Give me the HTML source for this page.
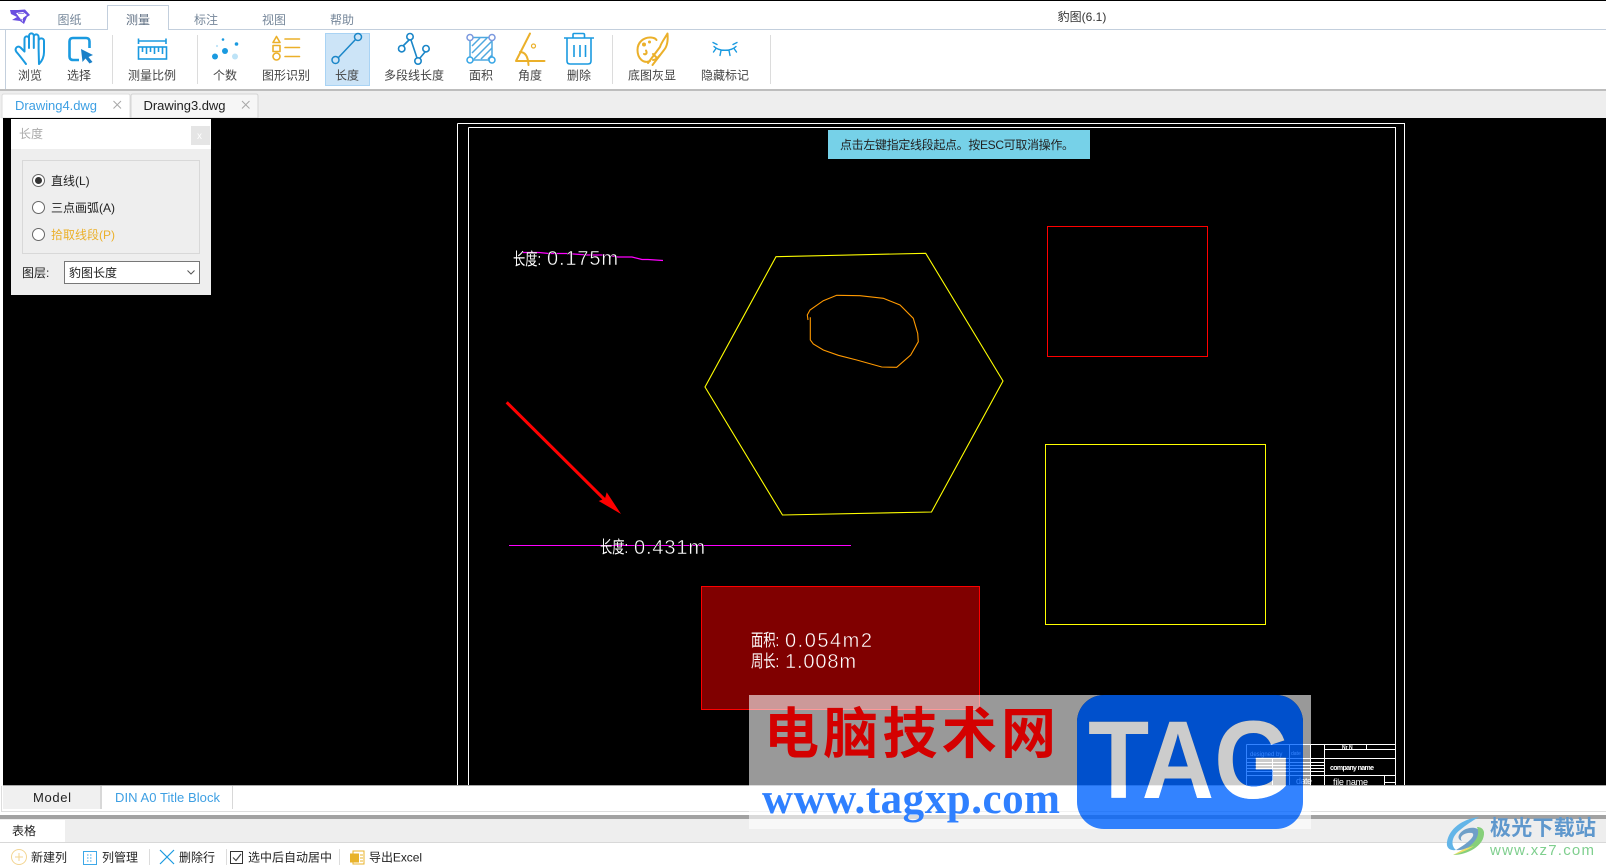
<!DOCTYPE html>
<html><head><meta charset="utf-8"><style>
html,body{margin:0;padding:0;background:#fff;width:1606px;height:865px;overflow:hidden}
svg{display:block;position:absolute;left:0;top:0}
text{font-family:"Liberation Sans","Noto Sans CJK SC",sans-serif;font-size:12px;fill:#444}
.c{text-anchor:middle}
.b{fill:none;stroke:#1a9ae0;stroke-width:2;stroke-linecap:round;stroke-linejoin:round}
.o{fill:none;stroke:#ebb02a;stroke-width:2;stroke-linecap:round;stroke-linejoin:round}
.cad{fill:#fff;stroke-width:.45}
.l{shape-rendering:crispEdges;fill:none}
</style></head><body>
<svg width="1606" height="865" viewBox="0 0 1606 865">
<defs>
<mask id="tagm" maskUnits="userSpaceOnUse" x="1070" y="690" width="240" height="145">
<rect x="1070" y="690" width="240" height="145" fill="#fff"/>
<text x="1088" y="798" textLength="204" lengthAdjust="spacingAndGlyphs" style="font-size:110px;font-weight:bold;fill:#000">TAG</text>
</mask>
</defs>
<rect width="1606" height="865" fill="#fff"/>
<rect width="1606" height="1" fill="#000"/>

<!-- ribbon -->
<path class="l" d="M0 29.500H107.500V5.500H168.500V29.500H1606M5.500 30V89" stroke="#c3cfdd"/>
<rect x="108" y="6" width="60" height="25" fill="#fff"/>
<text x="69.500" y="24" class="c" style="fill:#76879a">图纸</text>
<text x="138" y="24" class="c" style="fill:#5f6f83">测量</text>
<text x="206" y="24" class="c" style="fill:#76879a">标注</text>
<text x="274" y="24" class="c" style="fill:#76879a">视图</text>
<text x="342" y="24" class="c" style="fill:#76879a">帮助</text>
<text x="1082" y="21" class="c" style="fill:#333">豹图(6.1)</text>
<!-- app logo -->
<path d="M10 10L18 10L25 9.500L30 15L27 17L24 24L20 21L12 20L17 17L11 14Z" fill="#6a4fe0"/>
<path d="M16 13L23 12L27 15L23 18L23 22L19 17Z" fill="#fff"/>
<path d="M18 13.500L24 13.500M20 19L23 20" stroke="#9c8de8" fill="none"/>

<rect x="0" y="89" width="1606" height="2" fill="#bdbdbd"/>
<rect x="0" y="91" width="1606" height="27" fill="#eee"/>

<!-- separators -->
<path class="l" stroke="#dcdcdc" d="M112.500 35V84M197.500 35V84M612.500 35V84M770.500 35V84"/>
<rect x="325.500" y="33.500" width="44" height="52" fill="#cce4f7" stroke="#a9d3f4"/>

<!-- hand -->
<path class="b" d="M26 64C23 60 20 56 16.500 52C14 48.500 17.500 45 20.500 47.500L24.500 51.500V39C24.500 35.500 29 35.500 29 39V48M29 48V36C29 32.500 33.800 32.500 33.800 36V48M33.800 48V37C33.800 33.500 38.600 33.500 38.600 37V49M38.600 49V41C38.600 37.500 44 37.500 44 41V52C44 57 42 61 39 64Z"/>
<!-- select -->
<path d="M79 60H73C70.500 60 69.500 58.500 69.500 56.500V41.500C69.500 39.500 70.500 38 73 38H86C88.500 38 89.500 39.500 89.500 41.500V48" fill="none" stroke="#1a9ae0" stroke-width="2.600"/>
<path d="M81 49L93 55L88.500 57L92.500 62L89.500 63.500L85.500 58.500L82.500 62Z" fill="#1a80c8"/>
<!-- ruler -->
<path fill="none" stroke="#1a9ae0" stroke-width="1.600" d="M138.500 38.500V44M166 38.500V44M138.500 41H166"/>
<rect x="138.500" y="47" width="28" height="12" fill="#fff" stroke="#1a9ae0" stroke-width="1.600"/>
<path fill="none" stroke="#1a9ae0" stroke-width="1.600" d="M142.500 47V52M146.500 47V54M150.500 47V52M154.500 47V54M158.500 47V52M162.500 47V54"/>
<!-- count -->
<circle cx="223" cy="39.500" r="1.300" fill="#1a9ae0"/><circle cx="236.500" cy="44" r="1.800" fill="#1a9ae0"/><circle cx="217" cy="46" r="1.100" fill="#bde3f7"/><circle cx="225" cy="51" r="3" fill="#1a9ae0"/><circle cx="215" cy="56.500" r="3" fill="#1a9ae0"/><circle cx="235" cy="56.500" r="3" fill="#bde3f7"/>
<!-- shape recog -->
<path class="o" style="stroke-width:1.600" d="M276.500 36.500L273 42.500H280ZM273 45.500H280V51.500H273ZM285 39H299.500M285 47.500H299.500M285 56.500H299.500"/>
<circle cx="276.500" cy="56.500" r="3.500" class="o" style="stroke-width:1.600"/>
<!-- length -->
<path fill="none" stroke="#1a86c8" stroke-width="1.500" d="M338.500 57.500L355.500 39.500"/>
<circle cx="335.500" cy="60" r="3.500" fill="none" stroke="#1a86c8" stroke-width="1.500"/><circle cx="358" cy="37" r="3.500" fill="none" stroke="#1a86c8" stroke-width="1.500"/>
<!-- polyline -->
<path fill="none" stroke="#1a86c8" stroke-width="1.600" d="M403 46L409 40M411 40L417 58M420 58L425 52"/>
<g fill="none" stroke="#1a86c8" stroke-width="1.600"><circle cx="401.700" cy="48.700" r="3.200"/><circle cx="410" cy="36.700" r="3.200"/><circle cx="418" cy="61" r="3.200"/><circle cx="426" cy="48.700" r="3.200"/></g>
<!-- area -->
<rect x="470" y="37.500" width="22" height="22.500" fill="#fff" stroke="#4ea8e0" stroke-width="1.500"/>
<path stroke="#4ea8e0" stroke-width="1.500" fill="none" d="M472 46L480 38M472 53L487 38M474 59L492 41M481 59L492 48M488 59L492 55"/>
<g fill="#fff" stroke-width="1.500"><circle cx="470" cy="37.500" r="3" stroke="#7a98de"/><circle cx="492" cy="37.500" r="3" stroke="#7a98de"/><circle cx="470" cy="60" r="3" stroke="#35a5e5"/><circle cx="492" cy="60" r="3" stroke="#35a5e5"/></g>
<!-- angle -->
<path class="o" d="M530 33.500L516 61H544.500M520 52C525 52 528 56 528.500 65"/>
<circle cx="533.500" cy="46" r="2" fill="none" stroke="#ebb02a" stroke-width="1.200"/>
<!-- trash -->
<path fill="none" stroke="#1a9ae0" stroke-width="1.600" d="M564 38H594M573 38V34.500C573 33.800 573.500 33.500 574 33.500H583C583.800 33.500 584.500 34 584.500 34.800V38M567 38V61C567 63 568 64 570 64H588C590 64 591 63 591 61V38M574 45V57M580 45V57M585.500 45V57"/>
<!-- palette -->
<path class="o" d="M650 61C643 64 637.500 58 637.500 50C637.500 42 644 37 651 37.500C654 37.700 656 39 656.500 40M660 55C657 59 655 60 653 60M646 50.500C647.500 53 646 55 644 54"/>
<circle cx="644" cy="44.500" r="2" fill="#ebb02a"/><circle cx="649.500" cy="42" r="1.500" fill="#ebb02a"/>
<path class="o" d="M648 63L660 47C661 43 665 38 667.500 33.500C668 39 667.500 46 664 50L652.500 65M653 54L657 58"/>
<!-- hide -->
<path fill="none" stroke="#1a9ae0" stroke-width="1.400" stroke-linecap="round" d="M714 46.500C719 51.500 731 51.500 736 46.500M716 48.500L713.500 52M721 50.500L720 55.500M729 50.500L730 55.500M734 48.500L736.500 52M733 44.500L737 42.500M717 44.500L713 42.500"/>

<!-- labels -->
<g>
<text x="30" y="79.500" class="c">浏览</text><text x="79" y="79.500" class="c">选择</text>
<text x="152" y="79.500" class="c">测量比例</text><text x="225" y="79.500" class="c">个数</text>
<text x="286" y="79.500" class="c">图形识别</text><text x="347" y="79.500" class="c">长度</text>
<text x="414" y="79.500" class="c">多段线长度</text><text x="481" y="79.500" class="c">面积</text>
<text x="530" y="79.500" class="c">角度</text><text x="579" y="79.500" class="c">删除</text>
<text x="652" y="79.500" class="c">底图灰显</text><text x="725" y="79.500" class="c">隐藏标记</text>
</g>

<!-- doc tabs -->
<path d="M2 118V96Q2 94 4 94H128Q130 94 130 96V118Z" fill="#fff" stroke="#ddd" stroke-width="1"/>
<path d="M131 118V96Q131 94 133 94H256Q258 94 258 96V118Z" fill="#f6f6f6" stroke="#d4d4d4" stroke-width="1"/>
<text x="15" y="110" textLength="82" style="font-size:13px;fill:#3d9fe3">Drawing4.dwg</text>
<text x="143.500" y="110" textLength="82" style="font-size:13px;fill:#222">Drawing3.dwg</text>
<path stroke="#a8a8a8" fill="none" d="M113.500 101L121 108.500M121 101L113.500 108.500M242 101L249.500 108.500M249.500 101L242 108.500"/>

<!-- canvas -->
<rect x="3" y="118" width="1603" height="667" fill="#000"/>
<path class="l" stroke="#fff" d="M457.500 123.500H1404.500V785M457.500 123.500V785M468.500 127.500H1395.500V785M468.500 127.500V785"/>
<!-- title block -->
<path class="l" stroke="#fff" d="M1246.500 744.500H1395M1246.500 744.500V785M1289.500 744.500V785M1310.500 744.500V785M1324.500 744.500V785M1366.500 744.500V749.500M1324.500 749.500H1395M1324.500 758.500H1395M1246.500 758.500H1324.500M1246.500 762.500H1324.500M1246.500 765.500H1324.500M1246.500 768.500H1324.500M1246.500 771.500H1324.500M1246.500 775.500H1395M1384.500 775.500V785M1384.500 782.500H1395M1272.500 758.500V785"/>
<text x="1250" y="756" style="font-size:6px;fill:#fff">designed by</text>
<text x="1291" y="755" style="font-size:5px;fill:#fff">date</text>
<text x="1342" y="749" style="font-size:5px;fill:#fff;font-weight:bold">Nr N</text>
<text x="1330" y="770" textLength="44" style="font-size:7px;fill:#fff;font-weight:bold">company name</text>
<text x="1333" y="785" textLength="35" style="font-size:9px;fill:#fff">file name</text>
<text x="1296" y="784" textLength="16" style="font-size:9px;fill:#fff">date</text>

<!-- shapes -->
<path fill="none" stroke="#ffff00" stroke-width="1.100" d="M776 256.700L925.700 253.300L1003 381L931.500 512L782.500 515L705 387Z"/>
<path fill="none" stroke="#f90" stroke-width="1.100" d="M810.300 317.300L810.300 340L813.300 344L823.300 350L838.300 355.300L856.700 360L881.700 367L896.700 367.300L910.700 355L918.300 341.700L917.700 333.300L913.300 318.300L900 305L883.300 298.300L860 295.700L836.700 295.300L823.300 300.700L810 310L807.300 315L808 320"/>
<rect class="l" x="1047.500" y="226.500" width="160" height="130" stroke="#f00"/>
<rect class="l" x="1045.500" y="444.500" width="220" height="180" stroke="#ffff00"/>
<rect class="l" x="701.500" y="586.500" width="278" height="123" stroke="#f00" style="fill:#800000"/>
<path d="M506.700 402.300L608 503" stroke="#f00" stroke-width="3" fill="none"/>
<path d="M621 514L598.700 501L605 498.500L606.700 492.300Z" fill="#f00"/>
<path fill="none" stroke="#f0f" stroke-width="1.200" d="M523 252.500H539L549 253.500H567L587 255H607L618 257H632L642 259.500H648L663 260.500"/>
<path class="l" stroke="#f0f" d="M509 545.500H700M700 545.500H851"/>

<g class="cad">
<text x="513" y="265" textLength="28" lengthAdjust="spacingAndGlyphs" style="font-size:17px;fill:#fff">长度:</text>
<text x="547" y="265" textLength="71" stroke="#000" style="font-size:20px;fill:#fff">0.175m</text>
<text x="600" y="553" textLength="28" lengthAdjust="spacingAndGlyphs" style="font-size:17px;fill:#fff">长度:</text>
<text x="634" y="554" textLength="71" stroke="#000" style="font-size:20px;fill:#fff">0.431m</text>
<text x="751" y="646" textLength="28" lengthAdjust="spacingAndGlyphs" style="font-size:17px;fill:#fff">面积:</text>
<text x="785" y="647" textLength="87" stroke="#800000" style="font-size:20px;fill:#fff">0.054m2</text>
<text x="751" y="667" textLength="28" lengthAdjust="spacingAndGlyphs" style="font-size:17px;fill:#fff">周长:</text>
<text x="785" y="668" textLength="71" stroke="#800000" style="font-size:20px;fill:#fff">1.008m</text>
</g>

<!-- banner -->
<rect x="828" y="130" width="262" height="29" fill="#76d1e8"/>
<text x="840" y="149" textLength="234" style="fill:#222">点击左键指定线段起点。按ESC可取消操作。</text>

<!-- left panel -->
<rect x="11" y="119" width="200" height="176" fill="#eee"/>
<rect x="11" y="119" width="200" height="30" fill="#fff"/>
<rect x="191" y="126" width="19" height="19" fill="#e5e5e5"/>
<text x="197" y="139" style="font-size:10px;fill:#fff">x</text>
<text x="19" y="138" style="fill:#aaa">长度</text>
<rect class="l" x="22.500" y="160.500" width="177" height="93" stroke="#d8d8d8"/>
<g fill="#fff" stroke="#666" stroke-width="1"><circle cx="38.500" cy="180.500" r="6"/><circle cx="38.500" cy="207.500" r="6"/><circle cx="38.500" cy="234.500" r="6"/></g>
<circle cx="38.500" cy="180.500" r="3.500" fill="#333"/>
<text x="51" y="185" style="fill:#222">直线(L)</text>
<text x="51" y="212" style="fill:#222">三点画弧(A)</text>
<text x="51" y="239" style="fill:#ebb02a">拾取线段(P)</text>
<text x="22" y="277" style="fill:#222">图层:</text>
<rect class="l" x="64.500" y="261.500" width="135" height="22" stroke="#777" style="fill:#fff"/>
<text x="69" y="277" style="fill:#222">豹图长度</text>
<path fill="none" stroke="#555" d="M187.500 270.500L191 274L194.500 270.500"/>

<!-- sheet tabs -->
<rect x="3" y="785" width="1603" height="1" fill="#a8a8a8"/>
<rect x="3" y="786" width="97" height="23" fill="#f0f0f0"/>
<rect x="100" y="786" width="2" height="23" fill="#d8d8d8"/>
<rect x="232" y="786" width="1" height="23" fill="#d8d8d8"/>
<rect x="1" y="811" width="1605" height="1" fill="#ddd"/>
<rect x="1" y="786" width="1" height="25" fill="#ddd"/>
<text x="33" y="802" textLength="38" style="font-size:13px;fill:#222">Model</text>
<text x="115" y="802" textLength="105" style="font-size:13px;fill:#3d9fe3">DIN A0 Title Block</text>

<!-- bottom -->
<rect x="0" y="815" width="1606" height="4" fill="#a2a2a2"/>
<rect x="0" y="819" width="1606" height="23" fill="#eee"/>
<rect x="0" y="820" width="65" height="22" fill="#fff"/>
<rect x="0" y="842" width="1606" height="1" fill="#d8d8d8"/>
<text x="12" y="835" style="fill:#222">表格</text>

<circle cx="19" cy="857" r="7.500" fill="#fff" stroke="#f3d592"/>
<path stroke="#f3d592" fill="none" d="M15 857H23M19 853V861"/>
<text x="31" y="861.500" style="fill:#222">新建列</text>
<rect class="l" x="83.500" y="851.500" width="13" height="13" stroke="#3da8e8"/>
<path stroke="#3da8e8" fill="none" stroke-dasharray="1.500 1.500" d="M87 855H93M87 858H93M87 861H93"/>
<text x="102" y="861.500" style="fill:#222">列管理</text>
<path class="l" stroke="#dcdcdc" d="M149.500 849V865M226.500 849V865M339.500 849V865"/>
<path stroke="#1a9ae0" stroke-width="1.200" fill="none" d="M160 850L174 864M174 850L160 864"/>
<text x="179" y="861.500" style="fill:#222">删除行</text>
<rect class="l" x="230.500" y="851.500" width="12" height="12" stroke="#333"/>
<path fill="none" stroke="#444" stroke-width="1.200" d="M233 857.500L236 860.500L241 854"/>
<text x="248" y="861.500" style="fill:#222">选中后自动居中</text>
<rect x="353" y="851" width="11" height="13" fill="#fff" stroke="#e8b32b"/>
<rect x="350" y="853.500" width="9" height="9" fill="#e8b32b"/>
<path stroke="#e8b32b" d="M360 855H363M360 858H363M360 861H363"/>
<text x="369" y="861.500" textLength="53" style="fill:#222">导出Excel</text>

<!-- watermark -->
<path fill="#fff" fill-opacity=".6" fill-rule="evenodd" d="M749 695H1311V829H749ZM1104 695A27 27 0 0 0 1077 722V802A27 27 0 0 0 1104 829H1276A27 27 0 0 0 1303 802V722A27 27 0 0 0 1276 695Z"/>
<rect x="1077" y="695" width="226" height="134" rx="27" fill="#0064ff" fill-opacity=".8" mask="url(#tagm)"/>
<text x="1088" y="798" textLength="204" lengthAdjust="spacingAndGlyphs" style="font-size:110px;font-weight:bold;fill:#fff;fill-opacity:.8">TAG</text>
<text x="764" y="753" textLength="292" style="font-size:55px;font-weight:bold;fill:#d40000;font-family:'Noto Sans CJK SC',sans-serif">电脑技术网</text>
<text x="762" y="813" textLength="298" style="font-family:'Liberation Serif',serif;font-size:43px;font-weight:bold;fill:#2f80ff">www.tagxp.com</text>

<!-- corner logo -->
<path d="M1479 817C1462 819 1449 829 1447 842C1446 848 1450 851 1456 850C1450 845 1452 836 1460 830C1466 825 1472 821 1479 817Z" fill="#63b5e8"/>
<path d="M1456 850C1462 851 1472 847 1479 840C1483 835 1482 830 1475 828C1463 826 1453 838 1462 841C1458 836 1466 832 1472 833C1476 835 1470 842 1456 850Z" fill="#6f9fc8"/>
<path d="M1453 855C1467 855 1485 846 1484 832C1483 828 1480 827 1477 827C1482 838 1470 849 1453 855Z" fill="#86cf7a"/>
<path d="M1453 855C1460 853 1468 850 1474 846L1464 849Z" fill="#efe06a"/>
<text x="1490" y="835" textLength="106" style="font-size:21px;font-weight:bold;fill:#5f98cd">极光下载站</text>
<text x="1490" y="855" textLength="104" style="font-size:15px;fill:#7fcf8e">www.xz7.com</text>
</svg>
</body></html>
